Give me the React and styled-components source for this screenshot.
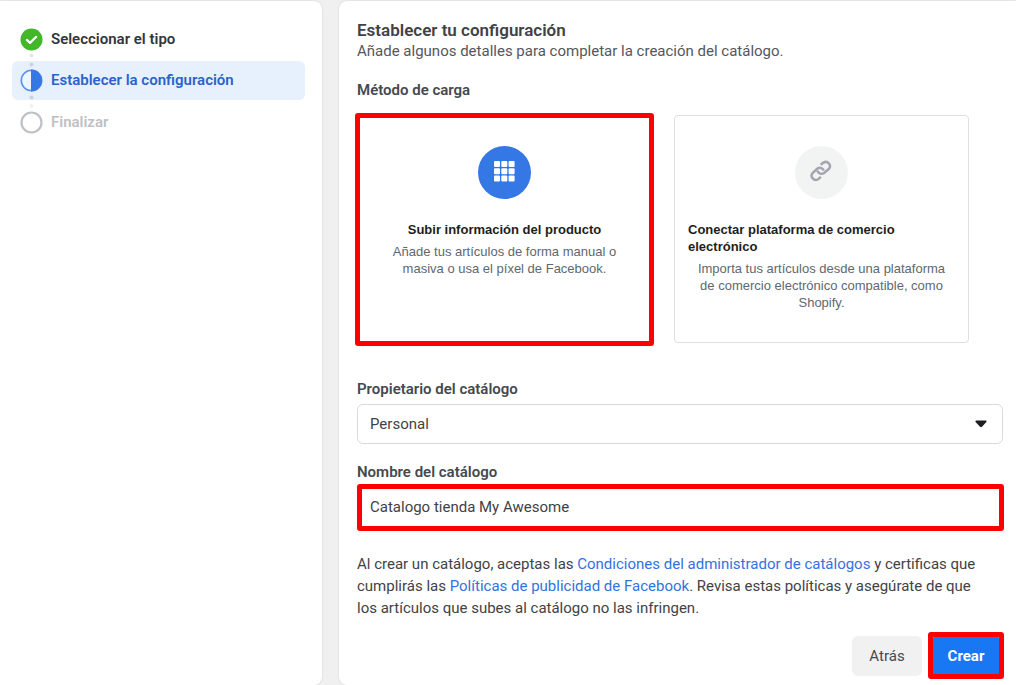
import React from 'react';
import styled, { createGlobalStyle, css } from 'styled-components';

const GlobalStyle = createGlobalStyle`
  *, *::before, *::after { box-sizing: border-box; }
  body {
    margin: 0;
    background: #f0f0f0;
    color: #1c1e21;
    font: 15px/22px Roboto, "Liberation Sans", sans-serif;
  }
  h1, h2, p, ol, fieldset { margin: 0; padding: 0; border: 0; }
  button, input, select { font: inherit; color: inherit; }
`;

const Page = styled.div`
  display: grid;
  grid-template-columns: 322px 1fr;
  gap: 17px;
  min-height: 100vh;
  padding-top: 1px;
`;

const panel = css`
  background: #fff;
  border-radius: 8px;
  box-shadow: 0 0 2px rgba(0, 0, 0, 0.16);
`;

const Sidebar = styled.nav`
  ${panel}
  border-top-left-radius: 0;
  border-bottom-left-radius: 0;
  padding: 18px 17px 18px 12px;
`;

const Steps = styled.ol`
  display: flex;
  flex-direction: column;
  gap: 2px;
  list-style: none;
`;

const Step = styled.li`
  display: flex;
  align-items: center;
  gap: 8px;
  height: ${p => (p.$active ? 39 : 40)}px;
  padding: 0 8px ${p => (p.$active ? 1 : 0)}px;
  border-radius: 6px;
  font-weight: 600;
  color: ${p => p.$color};
  background: ${p => (p.$active ? '#e7f0fd' : 'transparent')};
`;

const StepIcon = styled.svg`
  flex: none;
  width: 23px;
  height: 23px;
  overflow: visible;
`;

const Main = styled.main`
  ${panel}
  border-top-right-radius: 0;
  border-bottom-right-radius: 0;
  padding: 18px 13px 9px 18px;
`;

const Title = styled.h1`
  font-size: 17px;
  line-height: 22px;
  font-weight: 600;
  color: #3f4246;
`;

const Subtitle = styled.p`
  line-height: 20px;
  color: #54575b;
`;

const labelText = css`
  display: block;
  font-weight: 600;
  color: #444950;
`;

const Methods = styled.fieldset`
  display: grid;
  grid-template-columns: 1fr 1fr;
  gap: 14px 22px;
  min-width: 0;
  margin-top: 18px;
  padding-right: 34px;
`;

const Legend = styled.legend`
  ${labelText}
  padding: 0;
  margin-bottom: 14px;
`;

const Card = styled.label`
  position: relative;
  display: flex;
  flex-direction: column;
  align-items: center;
  min-height: 228px;
  padding: 30px 13px;
  border: 1px solid #dddfe2;
  border-radius: 4px;
  font: 13px/17px "Liberation Sans", Arial, sans-serif;
`;

const HiddenRadio = styled.input`
  position: absolute;
  opacity: 0;
  margin: 0;
`;

const CardIcon = styled.span`
  display: flex;
  align-items: center;
  justify-content: center;
  width: 53px;
  height: 53px;
  margin-bottom: 22px;
  padding-bottom: 3px;
  border-radius: 50%;
  background: ${p => (p.$selected ? '#3578e5' : '#f2f4f4')};
`;

const CardTitle = styled.span`
  font-weight: 700;
  color: #1c1e21;
`;

const CardText = styled.span`
  max-width: 250px;
  margin-top: 5px;
  text-align: center;
  color: #606770;
`;

const Highlight = styled.span`
  position: absolute;
  inset: ${p => p.$inset};
  border: 5px solid #ff0000;
  border-radius: 3px;
  pointer-events: none;
`;

const Field = styled.div`
  margin-top: ${p => p.$gap}px;
`;

const Label = styled.label`
  ${labelText}
  margin-bottom: 4px;
`;

const Control = styled.div`
  position: relative;
  display: flex;
`;

const box = css`
  width: 100%;
  height: 40px;
  padding: 0 12px;
  border: 1px solid #d8dadd;
  border-radius: 6px;
  background: #fff;
  color: #3f4246;
  outline: none;
`;

const Select = styled.select`
  ${box}
  appearance: none;
`;

const TextInput = styled.input`
  ${box}
`;

const Caret = styled.svg`
  position: absolute;
  right: 16px;
  top: 16px;
  pointer-events: none;
`;

const Terms = styled.p`
  margin-top: 26px;
  padding-right: 12px;
  color: #3f4246;
`;

const TermsLink = styled.a`
  color: #3372df;
  text-decoration: none;
`;

const Actions = styled.div`
  display: flex;
  justify-content: flex-end;
  gap: 9px;
  margin-top: 17px;
  padding-right: 2px;
`;

const Button = styled.button`
  position: relative;
  width: 70px;
  height: 40px;
  padding: 0;
  border: 0;
  border-radius: 6px;
  font-weight: ${p => (p.$primary ? 700 : 400)};
  color: ${p => (p.$primary ? '#fff' : '#444950')};
  background: ${p => (p.$primary ? '#1877f2' : '#f1f1f1')};
`;

const DoneIcon = () => (
  <StepIcon viewBox="0 0 23 23" aria-hidden="true">
    <circle cx="11.5" cy="11.5" r="11" fill="#42b72a" />
    <path d="M6.9 11.9l3.1 3 6.2-6.1" fill="none" stroke="#fff" strokeWidth="2.2" strokeLinecap="round" strokeLinejoin="round" />
    <circle cx="11.5" cy="27.5" r="2" fill="#e4e6e9" />
  </StepIcon>
);

const HalfIcon = () => (
  <StepIcon viewBox="0 0 23 23" aria-hidden="true">
    <circle cx="11.5" cy="-4.5" r="2" fill="#c9d3e0" />
    <circle cx="11.5" cy="11.5" r="10.2" fill="#eef5fe" stroke="#5a92ea" strokeWidth="1.6" />
    <path d="M11 .5a11 11 0 0 1 0 22z" fill="#3578e5" />
    <circle cx="11.5" cy="28.5" r="2" fill="#c9d3e0" />
  </StepIcon>
);

const EmptyIcon = () => (
  <StepIcon viewBox="0 0 23 23" aria-hidden="true">
    <circle cx="11.5" cy="-5" r="2" fill="#eff0f2" />
    <circle cx="11.5" cy="11.5" r="10" fill="#fff" stroke="#bec1c6" strokeWidth="2.2" />
  </StepIcon>
);

const GridIcon = () => (
  <svg width="21" height="21" viewBox="0 0 21 21" fill="#fff" aria-hidden="true">
    {[0, 7.3, 14.6].map(y =>
      [0, 7.3, 14.6].map(x => <rect key={`${x}-${y}`} x={x} y={y} width="6" height="6" rx="1" />)
    )}
  </svg>
);

const LinkIcon = () => (
  <svg width="23" height="22" viewBox="0 0 23 22" fill="none" stroke="#a3a6ae" strokeWidth="2.5" strokeLinecap="butt" aria-hidden="true">
    <path d="M7.4 10.6a4.2 4.2 0 0 0 6.6 2.4l4.8-4a4.2 4.2 0 0 0-5.3-6.4l-2.8 2.2" />
    <path d="M13.8 10.4a4.2 4.2 0 0 0-6.6-1.6l-4.6 4.2a4.2 4.2 0 0 0 5.5 6.2l2.8-2.3" />
  </svg>
);

export default function App() {
  return (
    <>
      <GlobalStyle />
      <Page>
        <Sidebar>
          <Steps>
            <Step $color="#333639"><DoneIcon />Seleccionar el tipo</Step>
            <Step $color="#2b63cc" $active aria-current="step"><HalfIcon />Establecer la configuración</Step>
            <Step $color="#bec1c4"><EmptyIcon />Finalizar</Step>
          </Steps>
        </Sidebar>
        <Main>
          <Title>Establecer tu configuración</Title>
          <Subtitle>Añade algunos detalles para completar la creación del catálogo.</Subtitle>
          <Methods>
            <Legend>Método de carga</Legend>
            <Card>
              <HiddenRadio type="radio" name="method" defaultChecked />
              <CardIcon $selected><GridIcon /></CardIcon>
              <CardTitle>Subir información del producto</CardTitle>
              <CardText>Añade tus artículos de forma manual o masiva o usa el píxel de Facebook.</CardText>
              <Highlight $inset="-3px -3px -4px" />
            </Card>
            <Card>
              <HiddenRadio type="radio" name="method" />
              <CardIcon><LinkIcon /></CardIcon>
              <CardTitle>Conectar plataforma de comercio electrónico</CardTitle>
              <CardText>Importa tus artículos desde una plataforma de comercio electrónico compatible, como Shopify.</CardText>
            </Card>
          </Methods>
          <Field $gap={35}>
            <Label htmlFor="owner">Propietario del catálogo</Label>
            <Control>
              <Select id="owner" defaultValue="Personal"><option>Personal</option></Select>
              <Caret width="12" height="8" viewBox="0 0 12 8" aria-hidden="true">
                <path d="M1.2.5h9.6q1.2.3.6 1.5L7.2 6.6Q6 7.8 4.8 6.6L.6 2Q0 .8 1.2.5z" fill="#1c1e21" />
              </Caret>
            </Control>
          </Field>
          <Field $gap={17}>
            <Label htmlFor="name">Nombre del catálogo</Label>
            <Control>
              <TextInput id="name" defaultValue="Catalogo tienda My Awesome" />
              <Highlight $inset="-3px -1px -4px 0" />
            </Control>
          </Field>
          <Terms>
            Al crear un catálogo, aceptas las <TermsLink href="#condiciones">Condiciones del administrador de catálogos</TermsLink> y certificas que cumplirás las <TermsLink href="#politicas">Políticas de publicidad de Facebook</TermsLink>. Revisa estas políticas y asegúrate de que los artículos que subes al catálogo no las infringen.
          </Terms>
          <Actions>
            <Button type="button">Atrás</Button>
            <Button type="button" $primary>Crear<Highlight $inset="-4px -3px -3px" /></Button>
          </Actions>
        </Main>
      </Page>
    </>
  );
}
